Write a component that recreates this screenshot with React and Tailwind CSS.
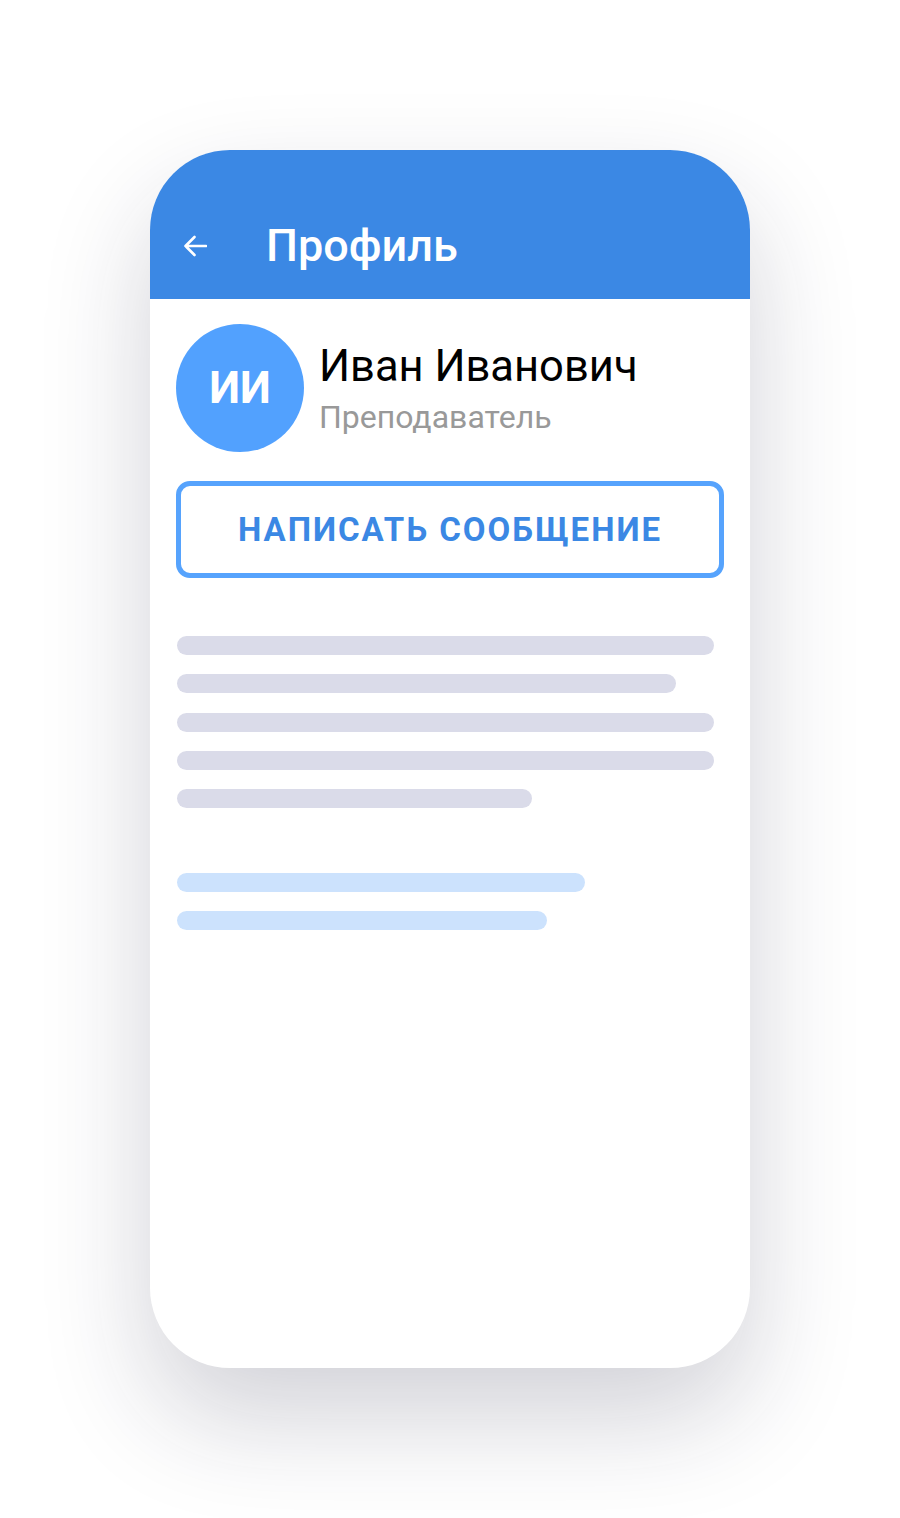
import React from 'react';

// Profile screen mockup inside a phone frame
const grayBars = [537, 499, 537, 537, 355];
const blueBars = [408, 370];

const BackArrow = () => (
  <svg width="24" height="22" viewBox="0 0 24 22" fill="none">
    <path
      d="M23 11H2.5M11.5 2L2.5 11l9 9"
      stroke="white"
      strokeWidth="2.6"
      strokeLinecap="round"
      strokeLinejoin="round"
    />
  </svg>
);

const App = () => {
  return (
    <div className="min-h-screen bg-white flex justify-center pt-[150px] pb-[150px] font-['Roboto',sans-serif]">
      <div className="w-[600px] h-[1218px] rounded-[80px] overflow-hidden bg-white shadow-[0_50px_110px_rgba(30,30,60,0.2)] flex flex-col">
        {/* Header */}
        <div className="h-[149px] bg-[#3b88e4] flex items-center pl-[33px] pt-[42px]">
          <BackArrow />
          <h1 className="ml-[59px] text-white text-[45px] font-medium leading-none">Профиль</h1>
        </div>

        <div className="px-[26px] pt-[25px]">
          {/* User info */}
          <div className="flex items-start">
            <div className="w-32 h-32 rounded-full bg-[#52a1fe] flex items-center justify-center shrink-0">
              <span className="text-white text-[44px] font-bold leading-none">ИИ</span>
            </div>
            <div className="ml-[15px] mt-[20px]">
              <div className="text-[43.5px] leading-[45px] text-black">Иван Иванович</div>
              <div className="mt-[12px] text-[32px] leading-none text-[#999999]">Преподаватель</div>
            </div>
          </div>

          {/* Message button */}
          <button className="mt-[29px] w-full h-[97px] border-[5px] border-[#56a3fd] rounded-[14px] flex items-center justify-center">
            <span className="text-[#3b88e4] text-[33px] font-bold tracking-[0.06em] leading-none">
              НАПИСАТЬ СООБЩЕНИЕ
            </span>
          </button>

          {/* Placeholder lines */}
          <div className="mt-[58px] ml-px flex flex-col gap-[19.3px]">
            {grayBars.map((w, i) => (
              <div key={i} className="h-[19px] rounded-full bg-[#dadbe9]" style={{ width: w }} />
            ))}
          </div>
          <div className="mt-[65px] ml-px flex flex-col gap-[19.3px]">
            {blueBars.map((w, i) => (
              <div key={i} className="h-[19px] rounded-full bg-[#cce2fd]" style={{ width: w }} />
            ))}
          </div>
        </div>
      </div>
    </div>
  );
};

export default App;
